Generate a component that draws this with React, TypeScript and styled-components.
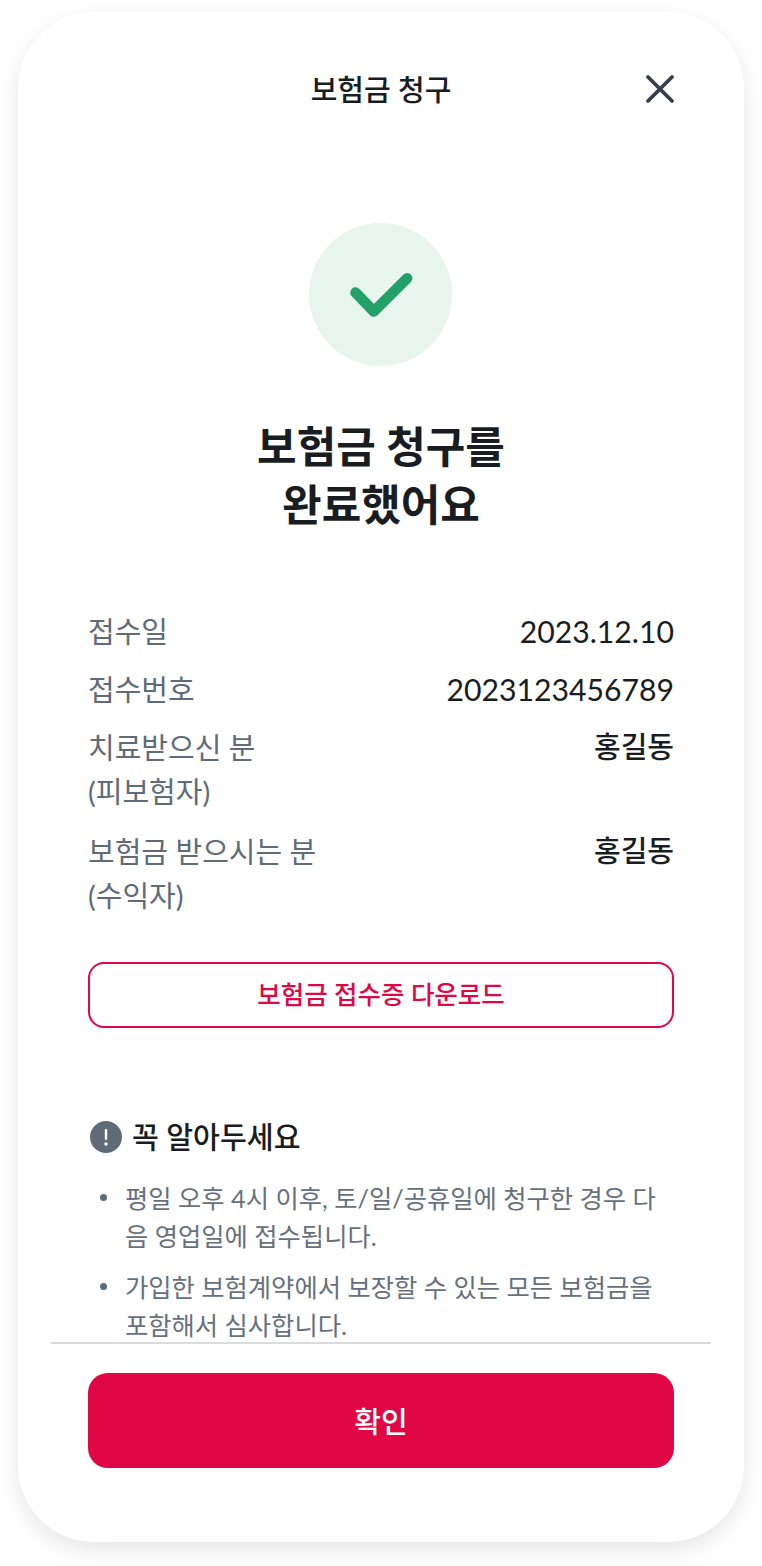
import styled, { createGlobalStyle } from "styled-components";

const GlobalStyle = createGlobalStyle`
  html, body {
    margin: 0;
    padding: 0;
    background: #fff;
  }
  body {
    font-family: Lato, "Noto Sans CJK KR", sans-serif;
    color: #191c20;
  }
  * {
    box-sizing: border-box;
  }
`;

const rows = [
  { label: ["접수일"], value: "2023.12.10" },
  { label: ["접수번호"], value: "2023123456789" },
  { label: ["치료받으신 분", "(피보험자)"], value: "홍길동", strong: true },
  { label: ["보험금 받으시는 분", "(수익자)"], value: "홍길동", strong: true },
];

export default function App() {
  return (
    <Page>
      <GlobalStyle />
      <Card>
        <Header>
          <HeaderTitle>보험금 청구</HeaderTitle>
          <CloseButton aria-label="닫기">
            <svg width="32" height="32" viewBox="0 0 32 32" fill="none">
              <path d="M4 4L28 28M28 4L4 28" stroke="#353f4a" strokeWidth="3.8" strokeLinecap="round" />
            </svg>
          </CloseButton>
        </Header>
        <Scroll>
          <CheckCircle>
            <svg width="64" height="48" viewBox="0 0 64 48" fill="none">
              <path d="M6.5 21.5L24.8 40.5L58.2 7.2" stroke="#23a067" strokeWidth="10.5" strokeLinecap="round" strokeLinejoin="round" />
            </svg>
          </CheckCircle>
          <Title>
            보험금 청구를
            <br />
            완료했어요
          </Title>
          <InfoList>
            {rows.map((row) => (
              <InfoRow key={row.label[0]}>
                <InfoLabel>
                  {row.label.map((line) => (
                    <div key={line}>{line}</div>
                  ))}
                </InfoLabel>
                <InfoValue $strong={row.strong}>{row.value}</InfoValue>
              </InfoRow>
            ))}
          </InfoList>
          <OutlineButton>보험금 접수증 다운로드</OutlineButton>
          <NoticeHeading>
            <svg width="32" height="32" viewBox="0 0 32 32">
              <circle cx="16" cy="16" r="16" fill="#5f6b77" />
              <rect x="14.8" y="8" width="2.4" height="11" rx="1.2" fill="#fff" />
              <circle cx="16" cy="23" r="1.7" fill="#fff" />
            </svg>
            꼭 알아두세요
          </NoticeHeading>
          <NoticeList>
            <li>평일 오후 4시 이후, 토/일/공휴일에 청구한 경우 다음 영업일에 접수됩니다.</li>
            <li>가입한 보험계약에서 보장할 수 있는 모든 보험금을 포함해서 심사합니다.</li>
          </NoticeList>
        </Scroll>
        <Footer>
          <PrimaryButton>확인</PrimaryButton>
        </Footer>
      </Card>
    </Page>
  );
}

const Page = styled.div`
  width: 762px;
  height: 1566px;
  padding: 12px 18px 24px;
  overflow: hidden;
`;

const Card = styled.div`
  width: 726px;
  height: 1530px;
  display: flex;
  flex-direction: column;
  background: #fff;
  border-radius: 76px;
  box-shadow: 0 8px 24px rgba(0, 0, 0, 0.1);
  overflow: hidden;
`;

const Header = styled.header`
  position: relative;
  flex: none;
  height: 154px;
  padding-top: 55px;
  text-align: center;
`;

const HeaderTitle = styled.h1`
  margin: 0;
  font-size: 29px;
  line-height: 46px;
  font-weight: 500;
`;

const CloseButton = styled.button`
  position: absolute;
  top: 61px;
  right: 68px;
  width: 32px;
  height: 32px;
  padding: 0;
  border: 0;
  background: none;
`;

const Scroll = styled.main`
  flex: 1;
  min-height: 0;
  margin: 0 33px;
  padding: 57px 37px 0;
  overflow: hidden;
  display: flex;
  flex-direction: column;
  border-bottom: 2px solid #d9dcdf;
`;

const CheckCircle = styled.div`
  flex: none;
  align-self: center;
  width: 143px;
  height: 143px;
  margin-right: 1px;
  display: flex;
  align-items: center;
  justify-content: center;
  border-radius: 50%;
  background: #e8f5ee;
`;

const Title = styled.h2`
  flex: none;
  margin: 52px 0 0;
  text-align: center;
  font-size: 43px;
  line-height: 58px;
  font-weight: 700;
`;

const InfoList = styled.div`
  flex: none;
  margin-top: 76px;
  display: flex;
  flex-direction: column;
  gap: 14px;
`;

const InfoRow = styled.div`
  display: flex;
  justify-content: space-between;
  align-items: flex-start;
  font-size: 29px;
  line-height: 44px;
  &:nth-child(3) {
    padding-bottom: 2px;
  }
`;

const InfoLabel = styled.div`
  color: #5f6b77;
`;

const InfoValue = styled.div<{ $strong?: boolean }>`
  margin-top: -1px;
  color: #191c20;
  font-size: ${(p) => (p.$strong ? 29 : 30.2)}px;
  font-weight: ${(p) => (p.$strong ? 500 : 400)};
`;

const OutlineButton = styled.button`
  flex: none;
  margin-top: 44px;
  height: 66px;
  padding: 0 0 5px;
  width: 100%;
  border: 2px solid #e10744;
  border-radius: 16px;
  background: #fff;
  color: #e10744;
  font-family: inherit;
  font-size: 25.5px;
  font-weight: 500;
`;

const NoticeHeading = styled.h3`
  flex: none;
  margin: 87px 0 0;
  display: flex;
  align-items: center;
  gap: 10px;
  font-size: 29.2px;
  line-height: 44px;
  font-weight: 500;
  svg {
    margin-left: 2px;
  }
`;

const NoticeList = styled.ul`
  flex: none;
  margin: 20px 0 0;
  padding: 0 0 0 12px;
  list-style: none;
  color: #66717c;
  font-size: 25.3px;
  line-height: 38px;
  word-break: break-all;
  li {
    display: flex;
    gap: 18px;
    margin-bottom: 13px;
  }
  li::before {
    content: "";
    flex: none;
    width: 7px;
    height: 7px;
    margin-top: 15px;
    border-radius: 50%;
    background: #5f6b77;
  }
`;

const Footer = styled.footer`
  flex: none;
  height: 198px;
  padding: 29px 70px 0;
`;

const PrimaryButton = styled.button`
  width: 100%;
  height: 95px;
  padding: 0 0 2px;
  border: 0;
  border-radius: 20px;
  background: #e10744;
  color: #fff;
  font-family: inherit;
  font-size: 29px;
  font-weight: 500;
`;
